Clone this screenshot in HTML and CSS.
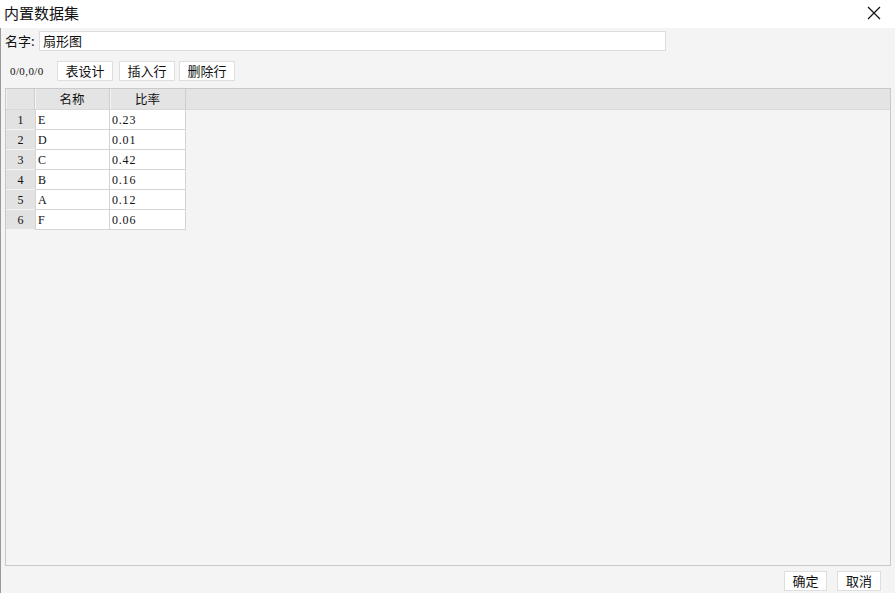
FILE: index.html
```html
<!DOCTYPE html>
<html>
<head>
<meta charset="utf-8">
<link rel="stylesheet" href="styles.css">
</head>
<body>
<div class="win">
  <div class="titlebar">
    <span class="title">内置数据集</span>
    <svg class="close" width="14" height="14" viewBox="0 0 14 14"><path d="M1 1L13 13M13 1L1 13" stroke="#111" stroke-width="1.2" fill="none"/></svg>
  </div>
  <div class="body">
    <div class="name-row">
      <span class="label">名字:</span>
      <div class="input">扇形图</div>
    </div>
    <div class="toolbar">
      <span class="pos">0/0,0/0</span>
      <button class="btn b1">表设计</button>
      <button class="btn b2">插入行</button>
      <button class="btn b3">删除行</button>
    </div>
    <div class="grid">
      <div class="hdr">
        <div class="hc num"></div>
        <div class="hc c1">名称</div>
        <div class="hc c2">比率</div>
      </div>
      <div class="row"><div class="num">1</div><div class="cell c1">E</div><div class="cell c2">0.23</div></div>
      <div class="row"><div class="num">2</div><div class="cell c1">D</div><div class="cell c2">0.01</div></div>
      <div class="row"><div class="num">3</div><div class="cell c1">C</div><div class="cell c2">0.42</div></div>
      <div class="row"><div class="num">4</div><div class="cell c1">B</div><div class="cell c2">0.16</div></div>
      <div class="row"><div class="num">5</div><div class="cell c1">A</div><div class="cell c2">0.12</div></div>
      <div class="row"><div class="num">6</div><div class="cell c1">F</div><div class="cell c2">0.06</div></div>
    </div>
    <div class="footer">
      <button class="btn ok">确定</button>
      <button class="btn cancel">取消</button>
    </div>
  </div>
</div>
</body>
</html>
```
FILE: styles.css
```css
html, body {
  margin: 0;
  padding: 0;
}
body {
  width: 895px;
  height: 593px;
  overflow: hidden;
  font-family: "Noto Sans CJK SC", "Noto Sans", sans-serif;
  color: #111;
  background: #f4f4f4;
}
.win {
  width: 895px;
  height: 593px;
  display: flex;
  flex-direction: column;
}
.titlebar {
  height: 28px;
  background: #fff;
  display: flex;
  align-items: center;
  justify-content: space-between;
  padding: 0 14px 0 4px;
  flex: none;
}
.title {
  font-size: 15px;
  line-height: 18px;
  margin-top: -2px;
}
.close {
  display: block;
  margin-top: -2px;
}
.body {
  flex: 1;
  display: flex;
  flex-direction: column;
  border-left: 1px solid #9a9a9a;
  background: #f4f4f4;
}
.name-row {
  display: flex;
  align-items: center;
  height: 20px;
  margin-top: 3px;
  padding-left: 4px;
}
.label {
  font-size: 13px;
  line-height: 20px;
  width: 33px;
}
.input {
  width: 622px;
  height: 18px;
  border: 1px solid #dcdcdc;
  background: #fff;
  font-size: 13px;
  line-height: 18px;
  padding-left: 3px;
  margin-left: 1px;
}
.toolbar {
  display: flex;
  align-items: center;
  height: 20px;
  margin-top: 10px;
  padding-left: 9px;
}
.pos {
  font-family: "Liberation Serif", serif;
  font-size: 11px;
  letter-spacing: 0.4px;
  width: 47px;
}
.btn {
  font-family: "Noto Sans CJK SC", "Noto Sans", sans-serif;
  font-size: 13px;
  height: 20px;
  line-height: 18px;
  padding: 0;
  background: #fff;
  border: 1px solid #dedede;
  color: #111;
  margin: 0;
}
.b1 { width: 56px; }
.b2 { width: 56px; margin-left: 6px; }
.b3 { width: 56px; margin-left: 4px; }
.grid {
  margin: 7px 4px 0 4px;
  height: 476px;
  border: 1px solid #c9c9c9;
  background: #f4f4f4;
  flex: none;
}
.hdr {
  display: flex;
  height: 20px;
  background: #e4e4e4;
  border-bottom: 1px solid #d8d8d8;
}
.hc {
  font-size: 12.5px;
  line-height: 19px;
  text-align: center;
  border-right: 1px solid #cfcfcf;
  box-shadow: inset 1px 0 0 #f4f4f4;
  box-sizing: border-box;
}
.hdr .num { width: 29px; }
.hdr .c1 { width: 75px; }
.hdr .c2 { width: 76px; }
.row {
  display: flex;
  height: 20px;
}
.row .num {
  width: 29px;
  box-sizing: border-box;
  background: #e2e2e2;
  border-bottom: 1px solid #f4f4f4;
  font-family: "Liberation Serif", serif;
  font-size: 12px;
  line-height: 20px;
  text-align: center;
}
.cell {
  box-sizing: border-box;
  background: #fff;
  border-right: 1px solid #d4d4d4;
  border-bottom: 1px solid #d4d4d4;
  font-family: "Liberation Serif", serif;
  font-size: 12px;
  letter-spacing: 0.8px;
  line-height: 20px;
  padding-left: 2px;
}
.cell.c1 { width: 75px; border-left: 1px solid #d4d4d4; }
.cell.c2 { width: 76px; }
.footer {
  display: flex;
  justify-content: flex-end;
  padding-right: 14px;
  margin-top: 5px;
}
.ok { width: 43px; }
.cancel { width: 44px; margin-left: 10px; }
```
